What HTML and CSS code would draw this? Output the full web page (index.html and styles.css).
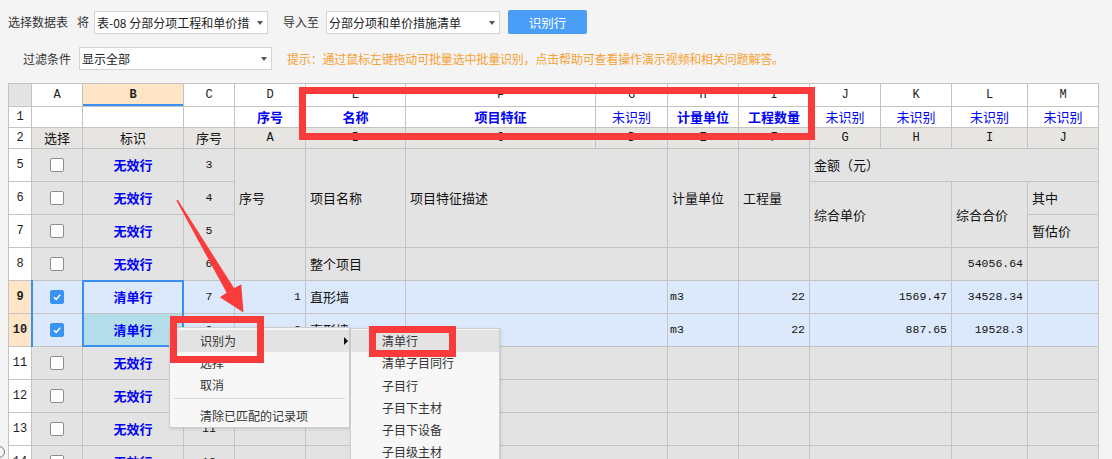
FILE: index.html
```html
<!DOCTYPE html>
<html lang="zh-CN">
<head>
<meta charset="utf-8">
<title>识别行</title>
<link rel="stylesheet" href="styles.css">
</head>
<body>
<div class="toolbar">
  <div class="row row1">
    <span class="label">选择数据表</span>
    <span class="label l-jiang">将</span>
    <div class="select s1"><span class="sel-text">表-08 分部分项工程和单价措施清单</span><i class="caret"></i></div>
    <span class="label l-import">导入至</span>
    <div class="select s2"><span class="sel-text">分部分项和单价措施清单</span><i class="caret"></i></div>
    <button class="btn">识别行</button>
  </div>
  <div class="row row2">
    <span class="label l-filter">过滤条件</span>
    <div class="select s3"><span class="sel-text">显示全部</span><i class="caret"></i></div>
    <span class="hint">提示：通过鼠标左键拖动可批量选中批量识别，点击帮助可查看操作演示视频和相关问题解答。</span>
  </div>
</div>

<div class="sheet">
  <!-- column header -->
  <div class="c corner"></div>
  <div class="c ch">A</div><div class="c ch chsel">B</div><div class="c ch">C</div><div class="c ch">D</div><div class="c ch">E</div><div class="c ch">F</div><div class="c ch">G</div><div class="c ch">H</div><div class="c ch">I</div><div class="c ch">J</div><div class="c ch">K</div><div class="c ch">L</div><div class="c ch">M</div>

  <!-- row 1 -->
  <div class="c rh">1</div>
  <div class="c"></div><div class="c"></div><div class="c"></div>
  <div class="c bb">序号</div><div class="c bb">名称</div><div class="c bb">项目特征</div><div class="c nb">未识别</div><div class="c bb">计量单位</div><div class="c bb">工程数量</div>
  <div class="c nb">未识别</div><div class="c nb">未识别</div><div class="c nb">未识别</div><div class="c nb">未识别</div>

  <!-- row 2 -->
  <div class="c rh">2</div>
  <div class="c g2">选择</div><div class="c g2">标识</div><div class="c g2">序号</div>
  <div class="c g2 mono">A</div><div class="c g2 mono">B</div><div class="c g2 mono">C</div><div class="c g2 mono">D</div><div class="c g2 mono">E</div><div class="c g2 mono">F</div><div class="c g2 mono">G</div><div class="c g2 mono">H</div><div class="c g2 mono">I</div><div class="c g2 mono">J</div>

  <!-- row 5 -->
  <div class="c rh">5</div>
  <div class="c d"><span class="cb"></span></div>
  <div class="c d bb">无效行</div>
  <div class="c d mono">3</div>
  <div class="c d l r3">序号</div>
  <div class="c d l r3">项目名称</div>
  <div class="c d l r3 c2">项目特征描述</div>
  <div class="c d l r3">计量单位</div>
  <div class="c d l r3">工程量</div>
  <div class="c d l c4">金额（元）</div>

  <!-- row 6 -->
  <div class="c rh">6</div>
  <div class="c d"><span class="cb"></span></div>
  <div class="c d bb">无效行</div>
  <div class="c d mono">4</div>
  <div class="c d l r2 c2">综合单价</div>
  <div class="c d l r2">综合合价</div>
  <div class="c d l">其中</div>

  <!-- row 7 -->
  <div class="c rh">7</div>
  <div class="c d"><span class="cb"></span></div>
  <div class="c d bb">无效行</div>
  <div class="c d mono">5</div>
  <div class="c d l">暂估价</div>

  <!-- row 8 -->
  <div class="c rh">8</div>
  <div class="c d"><span class="cb"></span></div>
  <div class="c d bb">无效行</div>
  <div class="c d mono">6</div>
  <div class="c d"></div>
  <div class="c d l">整个项目</div>
  <div class="c d c2"></div>
  <div class="c d"></div>
  <div class="c d"></div>
  <div class="c d c2"></div>
  <div class="c d r mono">54056.64</div>
  <div class="c d"></div>

  <!-- row 9 -->
  <div class="c rh rhsel">9</div>
  <div class="c s acol"><span class="cb on"><svg viewBox="0 0 14 14"><path d="M3.4 7.3 L6 9.8 L10.7 4.5"/></svg></span><i class="aline"></i></div>
  <div class="c s bb bsel">清单行<i class="selbox"></i></div>
  <div class="c s mono">7</div>
  <div class="c s r mono">1</div>
  <div class="c s l">直形墙</div>
  <div class="c s c2"></div>
  <div class="c s l2 mono">m3</div>
  <div class="c s r mono">22</div>
  <div class="c s r c2 mono">1569.47</div>
  <div class="c s r mono">34528.34</div>
  <div class="c s"></div>

  <!-- row 10 -->
  <div class="c rh rhsel">10</div>
  <div class="c s"><span class="cb on"><svg viewBox="0 0 14 14"><path d="M3.4 7.3 L6 9.8 L10.7 4.5"/></svg></span></div>
  <div class="c cur bb">清单行</div>
  <div class="c s mono">8</div>
  <div class="c s r mono">2</div>
  <div class="c s l">直形墙</div>
  <div class="c s c2"></div>
  <div class="c s l2 mono">m3</div>
  <div class="c s r mono">22</div>
  <div class="c s r c2 mono">887.65</div>
  <div class="c s r mono">19528.3</div>
  <div class="c s"></div>

  <!-- row 11 -->
  <div class="c rh">11</div>
  <div class="c d"><span class="cb"></span></div>
  <div class="c d bb">无效行</div>
  <div class="c d mono">9</div>
  <div class="c d"></div><div class="c d"></div><div class="c d c2"></div><div class="c d"></div><div class="c d"></div><div class="c d c2"></div><div class="c d"></div><div class="c d"></div>

  <!-- row 12 -->
  <div class="c rh">12</div>
  <div class="c d"><span class="cb"></span></div>
  <div class="c d bb">无效行</div>
  <div class="c d mono">10</div>
  <div class="c d"></div><div class="c d"></div><div class="c d c2"></div><div class="c d"></div><div class="c d"></div><div class="c d c2"></div><div class="c d"></div><div class="c d"></div>

  <!-- row 13 -->
  <div class="c rh">13</div>
  <div class="c d"><span class="cb"></span></div>
  <div class="c d bb">无效行</div>
  <div class="c d mono">11</div>
  <div class="c d"></div><div class="c d"></div><div class="c d c2"></div><div class="c d"></div><div class="c d"></div><div class="c d c2"></div><div class="c d"></div><div class="c d"></div>

  <!-- row 14 -->
  <div class="c rh">14</div>
  <div class="c d"><span class="cb"></span></div>
  <div class="c d bb">无效行</div>
  <div class="c d mono">12</div>
  <div class="c d"></div><div class="c d"></div><div class="c d c2"></div><div class="c d"></div><div class="c d"></div><div class="c d c2"></div><div class="c d"></div><div class="c d"></div>
</div>

<!-- context menu -->
<div class="menu ctx">
  <div class="item on">识别为<i class="sub-arrow"></i></div>
  <div class="item">选择</div>
  <div class="item">取消</div>
  <div class="sep"></div>
  <div class="item">清除已匹配的记录项</div>
</div>
<div class="menu submenu">
  <div class="item on">清单行</div>
  <div class="item">清单子目同行</div>
  <div class="item">子目行</div>
  <div class="item">子目下主材</div>
  <div class="item">子目下设备</div>
  <div class="item">子目级主材</div>
  <div class="item">子目级设备</div>
</div>

<!-- annotations -->
<div class="redbox rb-header"></div>
<div class="redbox rb-menu"></div>
<div class="redbox rb-sub"></div>
<svg class="overlay" viewBox="0 0 1112 459" width="1112" height="459">
  <polygon points="176.4,200.4 177.6,199.6 234.2,288.3 241.2,284.2 243.5,312.5 219.8,297.2 226.6,292.7" fill="#f93b3b"/>
  <circle cx="-1" cy="452" r="5.5" fill="none" stroke="#7a7a7a" stroke-width="1"/>
</svg>
</body>
</html>
```

FILE: styles.css
```css
* { box-sizing: border-box; }
html, body { margin: 0; padding: 0; }
body {
  width: 1112px;
  height: 459px;
  overflow: hidden;
  position: relative;
  background: #f4f4f4;
  color: #333;
  font-family: "Noto Sans CJK SC", "Noto Sans", sans-serif;
}

/* toolbar */
.toolbar { padding: 10px 0 0 8px; }
.row { display: flex; align-items: center; }
.row1 { height: 24px; }
.row2 { height: 23px; margin-top: 13px; }
.label {
  font-size: 12px;
  line-height: 24px;
  white-space: nowrap;
  color: #333;
}
.l-jiang { margin-left: 9px; }
.l-import { margin-left: 15px; }
.l-filter { margin-left: 15px; }

.select {
  position: relative;
  height: 23px;
  background: #fff;
  border: 1px solid #d4d4d4;
  font-size: 12px;
  line-height: 21px;
  padding-left: 2px;
  color: #222;
}
.sel-text { display: block; overflow: hidden; white-space: nowrap; }
.s1 { width: 174px; margin-left: 5px; }
.s1 .sel-text { width: 153px; }
.s2 { width: 174px; margin-left: 7px; }
.s2 .sel-text { width: 156px; }
.s3 { width: 193px; margin-left: 8px; }
.caret {
  position: absolute;
  right: 4px;
  top: 9px;
  width: 0;
  height: 0;
  border-left: 3.5px solid transparent;
  border-right: 3.5px solid transparent;
  border-top: 4px solid #555;
}
.btn {
  margin-left: 8px;
  width: 79px;
  height: 24px;
  border: none;
  border-radius: 2px;
  background: #4a9ef8;
  color: #fff;
  font-family: "Noto Sans CJK SC", sans-serif;
  font-size: 12.5px;
  padding: 0;
}
.hint {
  margin-left: 15px;
  font-size: 12px;
  letter-spacing: -0.17px;
  line-height: 23px;
  color: #f7a032;
  white-space: nowrap;
}

/* sheet */
.sheet {
  display: grid;
  width: max-content;
  margin: 13px 0 0 8px;
  padding: 1px;
  gap: 1px;
  background: #c4c4c4;
  grid-template-columns: 22px 50px 100px 50px 70px 99px 189px 71px 70px 70px 70px 70px 75px 70px;
  grid-template-rows: 22px 20px 20px repeat(10, 32px);
}
.c {
  background: #fff;
  display: flex;
  align-items: center;
  justify-content: center;
  font-size: 13px;
  line-height: 16px;
  color: #111;
  white-space: nowrap;
  overflow: hidden;
}
.mono { font-family: "Liberation Mono", "DejaVu Sans Mono", monospace; font-size: 11.5px; }
.g2.mono { font-size: 12px; }
.corner { background: #e4e4e4; }
.ch { font-family: "Liberation Mono", monospace; font-size: 12px; color: #222; }
.chsel { background: #fde5c6; font-weight: bold; box-shadow: inset 0 -2px 0 #3b8ff0; }
.rh { font-family: "Liberation Mono", monospace; font-size: 12px; color: #222; }
.rhsel { background: #fde5c6; font-weight: bold; }
.bb { color: #0000f5; font-weight: bold; }
.nb { color: #0000f5; }
.g2 { background: #e6e5e2; }
.d { background: #e3e3e3; }
.s { background: #dce8fb; }
.cur { background: #b2dde9; }
.l { justify-content: flex-start; padding-left: 4px; }
.l2 { justify-content: flex-start; padding-left: 2px; }
.r { justify-content: flex-end; padding-right: 4px; }
.c2 { grid-column: span 2; }
.c4 { grid-column: span 4; }
.r2 { grid-row: span 2; }
.r3 { grid-row: span 3; }

.cb {
  width: 14px;
  height: 14px;
  border: 1px solid #8e8e8e;
  border-radius: 2px;
  background: #fff;
  display: block;
}
.cb.on { background: #3a93f2; border-color: #3a93f2; }
.cb svg { display: block; width: 12px; height: 12px; }
.cb svg path { fill: none; stroke: #fff; stroke-width: 1.8; }

/* selection outline B9:B10 */
.bsel, .acol { position: relative; overflow: visible; }
.selbox {
  position: absolute;
  left: -1px;
  top: -1px;
  right: -1px;
  height: 67px;
  border: 2px solid #3b8ff0;
  z-index: 2;
}
.aline {
  position: absolute;
  left: -1px;
  top: -1px;
  width: 2px;
  height: 67px;
  background: #3b8ff0;
  z-index: 2;
}

/* context menus */
.menu {
  position: absolute;
  background: #f7f7f7;
  border: 1px solid #cdcdcd;
  box-shadow: 1px 1px 3px rgba(0, 0, 0, 0.12);
  font-size: 12px;
  color: #333;
  z-index: 5;
}
.menu .item {
  position: relative;
  height: 22px;
  line-height: 22px;
  padding-left: 30px;
  white-space: nowrap;
}
.menu .item.on { background: #e3e3e3; }
.ctx { left: 169px; top: 327px; width: 181px; padding-top: 2px; }
.sep { height: 1px; background: #d6d6d6; margin: 2px 4px 6px; }
.sub-arrow {
  position: absolute;
  right: 1px;
  top: 7px;
  width: 0;
  height: 0;
  border-top: 4px solid transparent;
  border-bottom: 4px solid transparent;
  border-left: 4px solid #111;
}
.submenu { left: 350px; top: 328px; width: 150px; padding-top: 1px; }
.submenu .item { height: 22.3px; line-height: 22.3px; padding-left: 31px; }

/* annotations */
.redbox {
  position: absolute;
  border: 7px solid #f93b3b;
  z-index: 8;
}
.rb-header { left: 299px; top: 87px; width: 516px; height: 53px; }
.rb-menu { left: 170px; top: 316px; width: 94px; height: 47px; }
.rb-sub { left: 369px; top: 326px; width: 87px; height: 31px; }
.overlay {
  position: absolute;
  left: 0;
  top: 0;
  z-index: 9;
  pointer-events: none;
}
```
